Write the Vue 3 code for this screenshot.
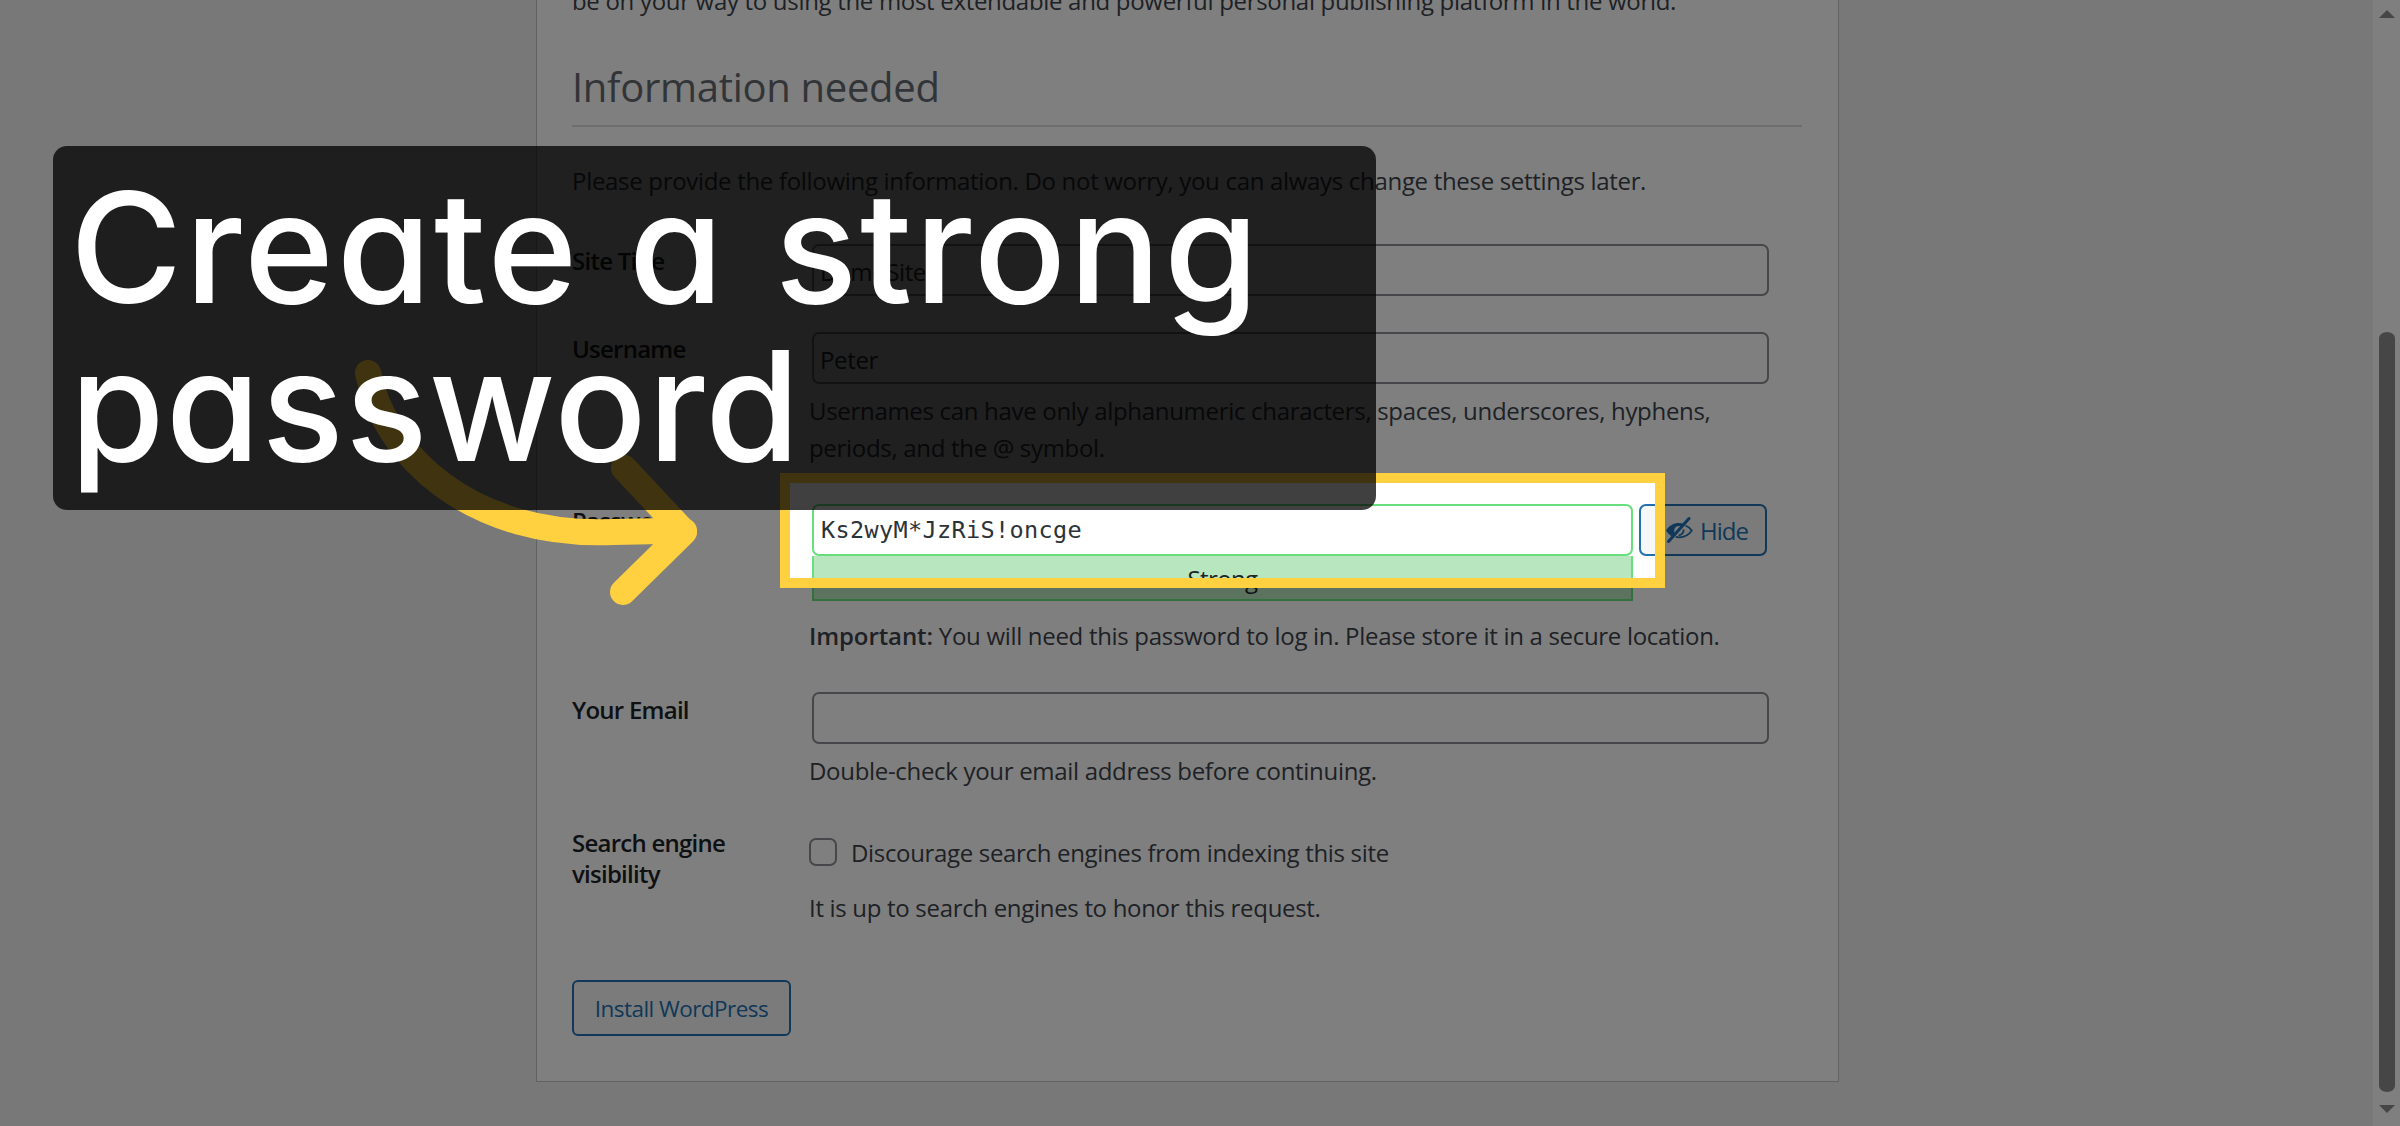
<script setup>
const siteTitle = 'DemoSite'
const username = 'Peter'
const password = 'Ks2wyM*JzRiS!oncge'
</script>

<template>
  <div class="page">
    <main class="main">
      <section class="card">
        <p class="clip">be on your way to using the most extendable and powerful personal publishing platform in the world.</p>
        <h2>Information needed</h2>
        <p class="intro">Please provide the following information. Do not worry, you can always change these settings later.</p>

        <div class="row site">
          <label>Site Title</label>
          <div class="field"><input class="text" :value="siteTitle" readonly /></div>
        </div>

        <div class="row user">
          <label>Username</label>
          <div class="field">
            <input class="text" :value="username" readonly />
            <p class="hint first">Usernames can have only alphanumeric characters, spaces, underscores, hyphens, periods, and the @ symbol.</p>
          </div>
        </div>

        <div class="row pass">
          <label>Password</label>
          <div class="field">
            <div class="pass-line">
              <input class="text mono" :value="password" readonly />
              <button class="hide" type="button">
                <svg class="eye" viewBox="0 0 28 26" aria-hidden="true">
                  <path class="eye-fill" d="M1 13.5C4 8.5 8.500 6 14 6c1.600 0 3 .2 4.300.7l-2.400 2.600C15.300 9 14.700 9 14 9c-2.800 0-4.800 2-4.800 4.700 0 .8.200 1.600.6 2.200l-3.100 3.300C4.500 18 2.500 16 1 13.500z" />
                  <path class="eye-line" d="M20.500 8.500c2.600 1.100 4.900 2.900 6.300 5-2.800 4.300-7.500 6.800-12.800 6.800-1.200 0-2.300-.1-3.400-.4" />
                  <path class="eye-line" d="M18.600 12.500c.3 2.800-1.800 5.500-5 5.800" />
                  <path class="eye-slash" d="M24 1.500 3.500 24.500" />
                </svg>
                <span>Hide</span>
              </button>
            </div>
            <div class="meter">Strong</div>
            <p class="hint important"><strong>Important:</strong> You will need this password to log in. Please store it in a secure location.</p>
          </div>
        </div>

        <div class="row email">
          <label>Your Email</label>
          <div class="field">
            <input class="text" value="" readonly />
            <p class="hint first">Double-check your email address before continuing.</p>
          </div>
        </div>

        <div class="row search">
          <label>Search engine visibility</label>
          <div class="field">
            <label class="check"><input type="checkbox" /><span>Discourage search engines from indexing this site</span></label>
            <p class="hint honor">It is up to search engines to honor this request.</p>
          </div>
        </div>

        <button class="install" type="button">Install WordPress</button>
      </section>
    </main>

    <aside class="scrollbar">
      <svg class="step" viewBox="0 0 16 9"><path d="M8 0 16 8H0z" /></svg>
      <div class="track"><div class="thumb"></div></div>
      <svg class="step" viewBox="0 0 16 9"><path d="M0 1H16L8 9z" /></svg>
    </aside>

    <div class="spot"></div>

    <svg class="arrow" viewBox="0 0 2400 1126" aria-hidden="true">
      <path d="M368 373C385 455 470 538 614 532Q650 531 684 531" />
      <path d="M624 468 684 532 623 592" />
    </svg>

    <div class="banner"><span class="l1">Create a strong</span> <span class="l2">password</span></div>
  </div>
</template>

<style>
html, body { margin: 0; background: #f0f0f1; overflow: hidden; }
</style>

<style scoped>
.page {
  position: relative;
  display: flex;
  width: 2400px;
  height: 1126px;
  overflow: hidden;
  font-family: "Open Sans", "Noto Sans", sans-serif;
  font-size: 24px;
  color: #3c434a;
}
.main { flex: 1; background: #f0f0f1; }
.card {
  box-sizing: border-box;
  width: 1303px;
  margin: -38px 0 0 536px;
  padding: 20px 36px 45px 35px;
  background: #fff;
  border: 1px solid #c3c4c7;
  border-top: 0;
}
p { margin: 0; line-height: 37px; letter-spacing: -.31px; }
h2 {
  margin: 43px 0 0;
  padding-bottom: 13px;
  border-bottom: 2px solid #dcdcde;
  font-size: 40px;
  font-weight: 400;
  line-height: 50px;
  color: #646970;
  letter-spacing: -.3px;
}
.intro { margin-top: 35px; }
.row { display: grid; grid-template-columns: 237px 1fr; }
.row > label { padding-top: 1px; font-weight: 600; line-height: 32px; color: #1d2327; letter-spacing: -.75px; }
.site { margin-top: 45px; }
.user { margin-top: 36px; }
.pass { margin-top: 38px; }
.email { margin-top: 38px; }
.email > label { padding-top: 2px; }
.search { margin-top: 38px; }
.search > label { width: 190px; padding-top: 0; line-height: 31px; }
.field { min-width: 0; }
.text {
  display: block;
  box-sizing: border-box;
  width: 957px;
  height: 52px;
  margin-left: 3px;
  padding: 2px 6px 0;
  background: #fff;
  border: 2px solid #8c8f94;
  border-radius: 7px;
  outline: 0;
  font: 24px "Open Sans", sans-serif;
  letter-spacing: -.35px;
  color: #2c3338;
}
.hint.first { margin-top: 8px; }
.pass-line { display: flex; gap: 6px; margin-left: 3px; }
.mono {
  width: 821px;
  height: 52px;
  margin: 0;
  padding: 0 7px;
  border-color: #68de7c;
  font: 23.500px "DejaVu Sans Mono", monospace;
  letter-spacing: .35px;
}
.hide {
  display: flex;
  align-items: center;
  gap: 7px;
  box-sizing: border-box;
  width: 128px;
  height: 52px;
  padding: 0 0 0 24px;
  background: #f6f7f7;
  border: 2px solid #2271b1;
  border-radius: 7px;
  font: 24px "Open Sans", sans-serif;
  letter-spacing: -1px;
  color: #2271b1;
}
.eye { width: 28px; height: 26px; flex: none; }
.eye-fill { fill: #2271b1; }
.eye-line { fill: none; stroke: #2271b1; stroke-width: 1.800; }
.eye-slash { fill: none; stroke: #2271b1; stroke-width: 3; stroke-linecap: round; }
.meter {
  box-sizing: border-box;
  width: 821px;
  height: 45px;
  margin-left: 3px;
  padding-top: 4px;
  background: #b8e6bf;
  border: 2px solid #68de7c;
  border-top: 0;
  text-align: center;
  line-height: 37px;
  letter-spacing: -.6px;
  color: #1d2327;
}
.important { margin-top: 16px; }
.important strong { font-weight: 600; letter-spacing: -.1px; }
.check { display: flex; align-items: center; gap: 14px; margin-top: 10px; line-height: 28px; letter-spacing: -.33px; }
.check span { padding-top: 2px; }
.check input {
  appearance: none;
  box-sizing: border-box;
  width: 28px;
  height: 28px;
  margin: 0;
  background: #fff;
  border: 2px solid #8c8f94;
  border-radius: 7px;
}
.honor { margin-top: 22px; }
.install {
  display: block;
  box-sizing: border-box;
  width: 219px;
  height: 56px;
  margin-top: 54px;
  padding: 0;
  background: #f6f7f7;
  border: 2px solid #2271b1;
  border-radius: 6px;
  font: 22.500px "Open Sans", sans-serif;
  letter-spacing: -.55px;
  color: #2271b1;
}
.scrollbar {
  display: flex;
  flex-direction: column;
  align-items: center;
  box-sizing: border-box;
  width: 27px;
  padding: 10px 5px 13px 6px;
  background: #fff;
}
.step { width: 16px; height: 9px; flex: none; fill: #8c8c8c; }
.track { flex: 1; width: 16px; padding: 313px 0 12px; box-sizing: border-box; }
.thumb { height: 100%; background: #8c8c8c; border-radius: 8px / 6px; }
.spot {
  position: absolute;
  left: 780px;
  top: 473px;
  box-sizing: border-box;
  width: 885px;
  height: 115px;
  border: 10px solid #ffd040;
  box-shadow: 0 0 0 3000px rgba(0, 0, 0, .5);
}
.arrow {
  position: absolute;
  left: 0;
  top: 0;
  width: 2400px;
  height: 1126px;
  fill: none;
  stroke: #ffd040;
  stroke-width: 26;
  stroke-linecap: round;
  stroke-linejoin: round;
}
.banner {
  position: absolute;
  left: 53px;
  top: 146px;
  box-sizing: border-box;
  width: 1323px;
  height: 364px;
  padding: 23px 20px 0 17px;
  background: rgba(0, 0, 0, .75);
  border-radius: 14px;
  font-family: Inter, sans-serif;
  font-feature-settings: "cv11";
  font-size: 153px;
  font-weight: 530;
  line-height: 158px;
  color: #fff;
}
.l1 { letter-spacing: 2.800px; word-spacing: 5px; }
.l2 { letter-spacing: 1.200px; }
</style>
